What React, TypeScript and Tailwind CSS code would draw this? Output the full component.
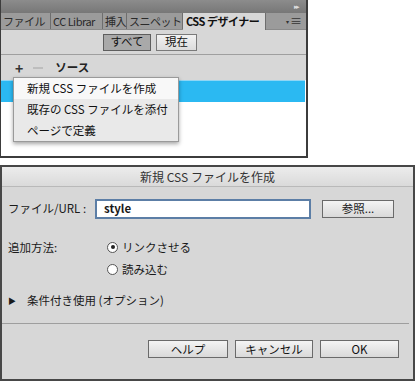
const font = { fontFamily: '"Noto Sans CJK JP", "Liberation Sans", sans-serif' };

const tabs = [
  { label: "ファイル", w: "w-[50px]" },
  { label: "CC Librar", w: "w-[52px]" },
  { label: "挿入", w: "w-[24px]" },
  { label: "スニペット", w: "w-[56px]" },
];

const DesignerPanel = () => {
  return (
    <div className="relative w-[308px] h-[158px] border-l border-r-2 border-b-2 border-[#3c3c3c] bg-white overflow-hidden">
      <div className="h-[13px] bg-gradient-to-b from-[#8c8c8c] to-[#777] flex justify-end items-center pr-[8px]">
        <span className="text-[7px] leading-none text-[#ddd] tracking-[-2px]">▸▸</span>
      </div>
      <div className="h-[17px] bg-[#9b9b9b] flex items-stretch text-[11px] leading-[17px] text-[#2a2a2a] border-b border-[#8a8a8a]">
        {tabs.map((t) => (
          <div
            key={t.label}
            className={`${t.w} shrink-0 pl-[2px] border-r border-[#6e6e6e] whitespace-nowrap tracking-[-0.5px]`}
          >
            {t.label}
          </div>
        ))}
        <div className="bg-[#d7d7d7] pl-[3px] w-[83px] shrink-0 -mb-px font-semibold text-[#111] whitespace-nowrap tracking-[-0.5px] border-r border-[#6e6e6e]">
          CSS デザイナー
        </div>
        <div className="flex-1 flex justify-end items-center pr-[4px] text-[#333]">
          <span className="text-[6px] mr-[1px]">▾</span>
          <span className="text-[12px] leading-none">≡</span>
        </div>
      </div>
      <div className="h-[25px] bg-[#d7d7d7] flex items-center pl-[102px] gap-[5px] text-[11.5px] border-b border-[#9f9f9f]">
        <div className="w-[48px] h-[17px] flex items-center justify-center bg-[#a9a9a9] border border-[#5e5e5e] text-[#111]">
          すべて
        </div>
        <div className="w-[41px] h-[17px] flex items-center justify-center bg-gradient-to-b from-[#f2f2f2] to-[#dcdcdc] border border-[#7a7a7a] text-[#111]">
          現在
        </div>
      </div>
      <div className="h-[25px] bg-[#d7d7d7] flex items-center text-[11.5px] text-[#222]">
        <span className="ml-[14px] font-bold text-[14px] leading-none text-[#333]">+</span>
        <span className="ml-[10px] w-[10px] h-[2px] bg-[#bdbdbd]" />
        <span className="ml-[12px] font-semibold">ソース</span>
      </div>
      <div className="h-[22px] bg-[#2bb9f2] border-t border-[#8fd6f5] mr-[1px]" />
      <div className="absolute left-[12px] top-[77px] w-[166px] h-[65px] bg-[#e9e9e9] border border-[#9a9a9a] shadow-[0_2px_4px_rgba(0,0,0,0.35)] text-[11.5px] text-[#111]">
        <div className="h-[21px] bg-[#f8f8f8] flex items-center pl-[13px]">新規 CSS ファイルを作成</div>
        <div className="h-[21px] flex items-center pl-[13px]">既存の CSS ファイルを添付</div>
        <div className="h-[21px] flex items-center pl-[13px]">ページで定義</div>
      </div>
    </div>
  );
};

const Radio = ({ checked, label }: { checked?: boolean; label: string }) => (
  <div className="flex items-center gap-[4px]">
    <span className="w-[11px] h-[11px] rounded-full border border-[#555] bg-white flex items-center justify-center">
      {checked && <span className="w-[4px] h-[4px] rounded-full bg-[#222]" />}
    </span>
    <span>{label}</span>
  </div>
);

const DialogButton = ({ label, w }: { label: string; w: string }) => (
  <div
    className={`${w} h-[18px] flex items-center justify-center bg-gradient-to-b from-[#f4f4f4] to-[#d9d9d9] border border-[#6a6a6a] text-[11.5px] text-[#111]`}
  >
    {label}
  </div>
);

const NewCssDialog = () => {
  return (
    <div className="w-[415px] h-[216px] border-2 border-[#474747] bg-[#d7d7d7] flex flex-col text-[11.5px] text-[#1a1a1a]">
      <div className="h-[20px] bg-gradient-to-b from-[#ececec] to-[#dadada] border-b border-[#b9b9b9] flex items-center justify-center text-[12px] text-[#333] shrink-0">
        新規 CSS ファイルを作成
      </div>
      <div className="flex items-center h-[23px] mt-[10px]">
        <span className="w-[93px] pl-[6px]">ファイル/URL :</span>
        <div className="w-[216px] h-[20px] bg-white border-2 border-[#5c7ea6] flex items-center pl-[7px] font-bold">
          style
        </div>
        <div className="ml-[11px] w-[72px] h-[18px] flex items-center justify-center bg-gradient-to-b from-[#f4f4f4] to-[#d9d9d9] border border-[#6a6a6a]">
          参照...
        </div>
      </div>
      <div className="flex mt-[20px]">
        <span className="w-[105px] pl-[6px] leading-[14px]">追加方法:</span>
        <div className="flex flex-col gap-[8px] leading-[14px]">
          <Radio checked label="リンクさせる" />
          <Radio label="読み込む" />
        </div>
      </div>
      <div className="flex items-center mt-[16px] pl-[6px]">
        <span className="text-[8px] leading-none mr-[11px]">▶</span>
        <span>条件付き使用 (オプション)</span>
      </div>
      <div className="mt-[14px] h-px bg-[#9e9e9e] mr-[4px]" />
      <div className="flex mt-[16px] pl-[146px] gap-[7px]">
        <DialogButton label="ヘルプ" w="w-[80px]" />
        <DialogButton label="キャンセル" w="w-[78px]" />
        <DialogButton label="OK" w="w-[79px]" />
      </div>
    </div>
  );
};

export default function App() {
  return (
    <div className="w-[417px] h-[381px] bg-white flex flex-col gap-[7px]" style={font}>
      <DesignerPanel />
      <NewCssDialog />
    </div>
  );
}
